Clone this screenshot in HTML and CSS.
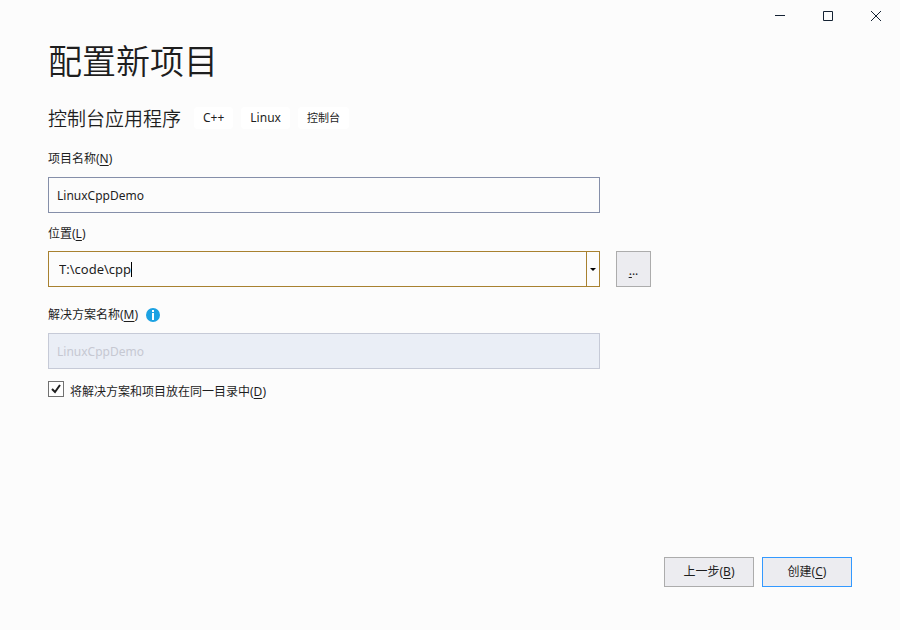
FILE: index.html
```html
<!DOCTYPE html>
<html lang="zh-CN">
<head>
    <meta charset="UTF-8">
    <meta name="viewport" content="width=device-width, initial-scale=1.0">
    <title>配置新项目</title>
    <link rel="stylesheet" href="styles.css">
</head>
<body>
    <!-- Window Buttons -->
    <div class="title-bar">
        <button class="window-button" type="button" aria-label="最小化">
            <svg width="10" height="10" viewBox="0 0 10 10"><path d="M0 4.5h10"/></svg>
        </button>
        <button class="window-button" type="button" aria-label="最大化">
            <svg width="10" height="10" viewBox="0 0 10 10"><path d="M.5.5h9v9h-9z"/></svg>
        </button>
        <button class="window-button" type="button" aria-label="关闭">
            <svg width="10" height="10" viewBox="0 0 10 10"><path d="M0 0l10 10M10 0L0 10"/></svg>
        </button>
    </div>
    <form class="project-form">
        <h1>配置新项目</h1>
        <div class="template">
            <h2>控制台应用程序</h2>
            <span class="tag">C++</span>
            <span class="tag">Linux</span>
            <span class="tag tag-chinese">控制台</span>
        </div>
        <!-- Project Name -->
        <div class="field">
            <label for="project-name">项目名称(<u>N</u>)</label>
            <input class="text-box" type="text" id="project-name" value="LinuxCppDemo">
        </div>
        <!-- Location -->
        <div class="field location-field">
            <label for="location">位置(<u>L</u>)</label>
            <div class="location-row">
                <div class="combo-box">
                    <div class="combo-text">
                        <input type="text" id="location" value="T:\code\cpp">
                        <span class="caret"></span>
                    </div>
                    <button class="combo-arrow" type="button" aria-label="最近的位置">
                        <svg width="6" height="3" viewBox="0 0 6 3"><path d="M0 0h6L3 3z"/></svg>
                    </button>
                </div>
                <button class="button browse-button" type="button" aria-label="浏览"><u>.</u>..</button>
            </div>
        </div>
        <!-- Solution Name -->
        <div class="field solution-field">
            <div class="label-row">
                <label for="solution-name">解决方案名称(<u>M</u>)</label>
                <svg class="info-icon" width="14" height="14" viewBox="0 0 14 14">
                    <circle cx="7" cy="7" r="7"/>
                    <path d="M6 2h2v2H6zM6 5h2v7H6z"/>
                </svg>
            </div>
            <input class="text-box" type="text" id="solution-name" value="LinuxCppDemo" disabled>
        </div>
        <div class="check-row">
            <input type="checkbox" id="same-directory" checked>
            <label for="same-directory">将解决方案和项目放在同一目录中(<u>D</u>)</label>
        </div>
        <!-- Bottom Buttons -->
        <div class="actions">
            <button class="button" type="button">上一步(<u>B</u>)</button>
            <button class="button create-button" type="submit">创建(<u>C</u>)</button>
        </div>
    </form>
</body>
</html>
```
FILE: styles.css
```css
/* Global Styling */
* {
    box-sizing: border-box;
}
body {
    display: flex;
    flex-direction: column;
    min-height: 100vh;
    margin: 0;
    background-color: #fcfcfc;
    color: #1e1e1e;
    font-family: "Noto Sans", "Noto Sans CJK SC", sans-serif;
    font-size: 12px;
    line-height: 18px;
}
input,
button {
    margin: 0;
    color: inherit;
    font: inherit;
}
u {
    text-underline-offset: 2px;
}
/* Window Buttons */
.title-bar {
    display: flex;
    justify-content: flex-end;
}
.window-button {
    display: flex;
    align-items: center;
    justify-content: center;
    width: 48px;
    height: 32px;
    padding: 0;
    border: none;
    background: none;
}
.window-button svg {
    fill: none;
    stroke: #142233;
}
/* Form */
.project-form {
    display: flex;
    flex: 1;
    flex-direction: column;
    padding: 4px 48px 43px;
}
h1,
h2 {
    margin: 0;
    font-family: "Noto Sans CJK SC", sans-serif;
    font-weight: 350;
}
h1 {
    font-size: 34px;
    line-height: 48px;
}
h2 {
    margin-right: 5px;
    font-size: 19px;
    line-height: 28px;
}
.template {
    display: flex;
    align-items: center;
    gap: 8px;
    margin: 20px 0 18px;
}
.tag {
    padding: 2px 9px;
    border-radius: 4px;
    background-color: #ffffff;
}
.tag-chinese {
    font-size: 11px;
}
/* Fields */
.field {
    display: flex;
    flex-direction: column;
    gap: 9px;
    margin-bottom: 12px;
}
.text-box,
.combo-box {
    width: 552px;
    max-width: 100%;
    height: 36px;
    border: 1px solid #858fa9;
    background-color: #fcfcfc;
}
.text-box {
    padding: 0 8px;
}
.text-box:disabled {
    border-color: #c6cad7;
    background-color: #eaeef6;
    color: #c6c8d2;
}
.location-field {
    gap: 8px;
}
.location-row {
    display: flex;
    gap: 16px;
}
.combo-box {
    display: flex;
    border-color: #a88130;
}
.combo-text {
    display: flex;
    flex: 1;
    align-items: center;
    padding-left: 10px;
}
.combo-text input {
    field-sizing: content;
    padding: 0;
    border: none;
    outline: none;
    background: none;
    font-size: 13px;
}
.caret {
    width: 1px;
    height: 15px;
    background-color: #000000;
}
.combo-arrow {
    display: flex;
    align-items: center;
    justify-content: center;
    width: 13px;
    padding: 0;
    border: none;
    border-left: 1px solid #a88130;
    background: none;
}
.solution-field {
    margin-top: 7px;
}
.label-row {
    display: flex;
    align-items: center;
    gap: 8px;
}
.info-icon circle {
    fill: #1ba1e2;
}
.info-icon path {
    fill: #ffffff;
}
/* Check Box */
.check-row {
    display: flex;
    align-items: flex-start;
    gap: 6px;
}
.check-row label {
    padding-top: 2px;
}
.check-row input {
    appearance: none;
    width: 16px;
    height: 16px;
    border: 1px solid #717171;
    background: #fefefe url("data:image/svg+xml,%3Csvg xmlns='http://www.w3.org/2000/svg' viewBox='0 0 14 14'%3E%3Cpath d='M3 7l3 3 5-7' fill='none' stroke='%231e1e1e' stroke-width='2'/%3E%3C/svg%3E");
}
/* Buttons */
.button {
    width: 90px;
    height: 30px;
    padding: 0;
    border: 1px solid #acacac;
    background-color: #ececf0;
}
.browse-button {
    width: 35px;
    height: 36px;
    padding-top: 4px;
}
.create-button {
    border-color: #3399ff;
}
.actions {
    display: flex;
    justify-content: flex-end;
    gap: 8px;
    margin-top: auto;
}
```
